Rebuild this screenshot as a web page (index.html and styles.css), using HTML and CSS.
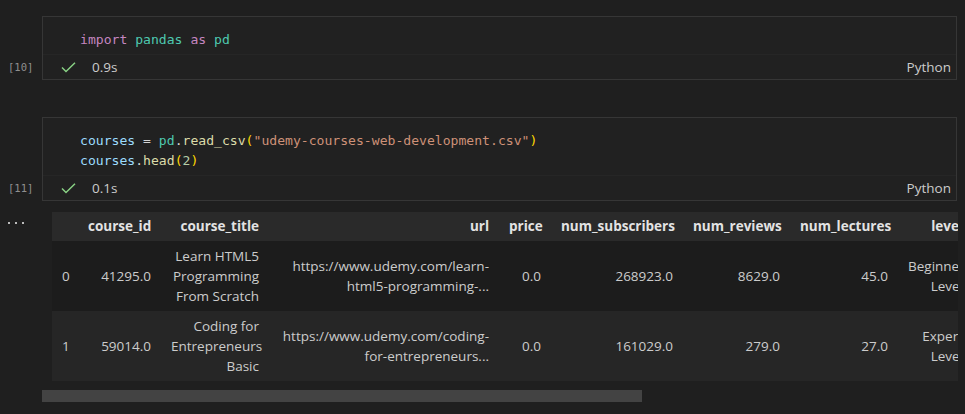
FILE: index.html
```html
<!DOCTYPE html>
<html>
<head>
<meta charset="utf-8">
<link rel="stylesheet" href="styles.css">
</head>
<body>
<div class="notebook">
  <div class="cell-row first">
    <div class="gutter"><span class="count">[10]</span></div>
    <div class="cell">
      <div class="editor">
        <div class="line"><span class="kw">import</span> <span class="mod">pandas</span> <span class="kw">as</span> <span class="mod">pd</span></div>
      </div>
      <div class="status">
        <svg class="check" width="15" height="11" viewBox="0 0 15 11"><path d="M1 5.5 L5 9.5 L14 0.8" fill="none" stroke="#89d185" stroke-width="1.5"/></svg>
        <span class="time">0.9s</span>
        <span class="lang">Python</span>
      </div>
    </div>
  </div>

  <div class="cell-row second">
    <div class="gutter"><span class="count">[11]</span></div>
    <div class="cell">
      <div class="editor">
        <div class="line"><span class="var">courses</span> <span class="op">=</span> <span class="mod">pd</span><span class="op">.</span><span class="fn">read_csv</span><span class="br">(</span><span class="str">"udemy-courses-web-development.csv"</span><span class="br">)</span></div>
        <div class="line"><span class="var">courses</span><span class="op">.</span><span class="fn">head</span><span class="br">(</span><span class="num">2</span><span class="br">)</span></div>
      </div>
      <div class="status">
        <svg class="check" width="15" height="11" viewBox="0 0 15 11"><path d="M1 5.5 L5 9.5 L14 0.8" fill="none" stroke="#89d185" stroke-width="1.5"/></svg>
        <span class="time">0.1s</span>
        <span class="lang">Python</span>
      </div>
    </div>
  </div>

  <div class="output-row">
    <div class="out-gutter">
      <svg width="16" height="4" viewBox="0 0 16 4"><rect x="0" y="1" width="2" height="2" fill="#bbbbbb"/><rect x="7" y="1" width="2" height="2" fill="#bbbbbb"/><rect x="14" y="1" width="2" height="2" fill="#bbbbbb"/></svg>
    </div>
    <div class="output">
      <div class="table-wrap">
        <table class="df">
          <colgroup>
            <col class="c-idx"><col class="c-id"><col class="c-title"><col class="c-url"><col class="c-price"><col class="c-subs"><col class="c-rev"><col class="c-lec"><col class="c-level">
          </colgroup>
          <thead>
            <tr><th></th><th>course_id</th><th>course_title</th><th>url</th><th>price</th><th>num_subscribers</th><th>num_reviews</th><th>num_lectures</th><th>level</th></tr>
          </thead>
          <tbody>
            <tr class="r0"><td class="idx">0</td><td>41295.0</td><td>Learn HTML5<br>Programming<br>From Scratch</td><td>https://www.udemy.com/learn-<br>html5-programming-...</td><td>0.0</td><td>268923.0</td><td>8629.0</td><td>45.0</td><td>Beginner<br>Level</td></tr>
            <tr class="r1"><td class="idx">1</td><td>59014.0</td><td>Coding for<br>Entrepreneurs<br>Basic</td><td>https://www.udemy.com/coding-<br>for-entrepreneurs...</td><td>0.0</td><td>161029.0</td><td>279.0</td><td>27.0</td><td>Expert<br>Level</td></tr>
          </tbody>
        </table>
      </div>
      <div class="hscroll"><div class="thumb"></div></div>
    </div>
  </div>
</div>
</body>
</html>
```
FILE: styles.css
```css
html, body {
  margin: 0;
  padding: 0;
  background: #1f1f1f;
  width: 965px;
  height: 414px;
  overflow: hidden;
}

.notebook {
  font-family: "Open Sans", "Noto Sans", sans-serif;
  font-size: 13.5px;
  color: #cccccc;
}

.cell-row {
  display: grid;
  grid-template-columns: 42px 915px;
}
.cell-row.first { margin-top: 16px; }
.cell-row.second { margin-top: 37px; }

.gutter {
  display: flex;
  align-items: flex-end;
}
.count {
  font-family: "DejaVu Sans Mono", monospace;
  font-size: 10.5px;
  color: #8f8f8f;
  line-height: 25px;
  height: 25px;
  padding-left: 8px;
}

.cell {
  border: 1px solid #363636;
  background: #212121;
}

.editor {
  padding: 13px 0 4px 37px;
  border-bottom: 1px solid #262626;
}
.line {
  font-family: "DejaVu Sans Mono", monospace;
  font-size: 13.1px;
  line-height: 20px;
  height: 20px;
  white-space: pre;
  color: #d4d4d4;
}
.kw { color: #c586c0; }
.mod { color: #4ec9b0; }
.var { color: #9cdcfe; }
.fn { color: #dcdcaa; }
.br { color: #ffd700; }
.str { color: #ce9178; }
.num { color: #b5cea8; }
.op { color: #d4d4d4; }

.status {
  display: flex;
  align-items: center;
  height: 24px;
  padding-left: 18px;
  padding-right: 5px;
}
.check { display: block; }
.time {
  margin-left: 16px;
  color: #cccccc;
}
.lang {
  margin-left: auto;
  color: #cccccc;
}

.output-row {
  display: grid;
  grid-template-columns: 42px 916px;
  margin-top: 11px;
}
.out-gutter {
  padding-left: 8px;
  padding-top: 9px;
}
.out-gutter svg { display: block; }

.output {
  overflow: hidden;
}
.table-wrap {
  padding-left: 10px;
  overflow: hidden;
}

.df {
  border-collapse: collapse;
  table-layout: fixed;
  width: 921px;
  line-height: 20px;
  white-space: nowrap;
}
.df th, .df td {
  text-align: right;
  padding: 5px 10px;
  overflow: hidden;
}
.df thead tr { background: #2a2a2a; }
.df th {
  font-weight: 700;
  color: #e3e3e3;
  padding-top: 4px;
  padding-bottom: 5px;
}
.df td { color: #cccccc; vertical-align: middle; }
.df .r0 { background: #1c1c1c; }
.df .r1 { background: #262626; }
.df .r0 td, .df .r1 td { height: 60px; }
.df td.idx { text-align: left; }

.c-idx { width: 26px; }
.c-id { width: 83px; }
.c-title { width: 108px; }
.c-url { width: 230px; }
.c-price { width: 52px; }
.c-subs { width: 132px; }
.c-rev { width: 107px; }
.c-lec { width: 108px; }
.c-level { width: 75px; }

.hscroll {
  margin-top: 9px;
  height: 12px;
}
.thumb {
  width: 600px;
  height: 12px;
  background: #434343;
}
```
